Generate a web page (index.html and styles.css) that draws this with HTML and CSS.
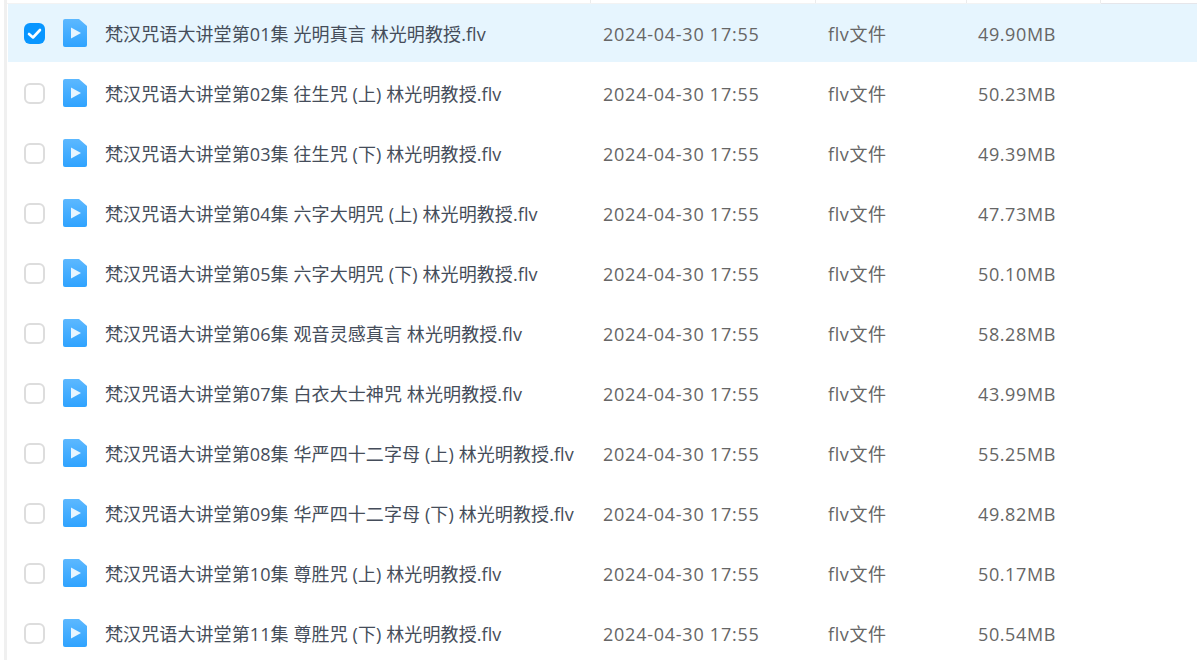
FILE: index.html
```html
<!DOCTYPE html>
<html lang="zh-CN">
<head>
    <meta charset="UTF-8">
    <title>文件列表</title>
    <link rel="stylesheet" href="styles.css">
</head>
<body>
    <svg class="defs" width="0" height="0">
        <defs>
            <linearGradient id="fileBlue" x1="0" y1="0" x2="0" y2="1">
                <stop offset="0" stop-color="#5cb8ff"/>
                <stop offset="1" stop-color="#2fa3ff"/>
            </linearGradient>
            <symbol id="video" viewBox="0 0 24 28">
                <path d="M2 0H16L24 7V26a2 2 0 0 1-2 2H2a2 2 0 0 1-2-2V2a2 2 0 0 1 2-2Z" fill="url(#fileBlue)"/>
                <path d="M8 8.5 18 14 8 19.5Z" fill="#e8f5ff"/>
            </symbol>
        </defs>
    </svg>
    <div class="header-line">
        <span class="tick t1"></span><span class="tick t2"></span><span class="tick t3"></span><span class="tick t4"></span><span class="header-end"></span>
    </div>
    <div class="list">
        <div class="row selected">
            <span class="check"><svg viewBox="0 0 21 21" width="21" height="21"><path d="M5 11 9 14.5 16 7" fill="none" stroke="#fff" stroke-width="2.6" stroke-linecap="round" stroke-linejoin="round"/></svg></span>
            <svg class="icon"><use href="#video"/></svg>
            <span class="name">梵汉咒语大讲堂第01集 光明真言 林光明教授.flv</span>
            <span class="date">2024-04-30 17:55</span><span class="type">flv文件</span><span class="size">49.90MB</span>
        </div>
        <div class="row">
            <span class="check"></span>
            <svg class="icon"><use href="#video"/></svg>
            <span class="name">梵汉咒语大讲堂第02集 往生咒 (上) 林光明教授.flv</span>
            <span class="date">2024-04-30 17:55</span><span class="type">flv文件</span><span class="size">50.23MB</span>
        </div>
        <div class="row">
            <span class="check"></span>
            <svg class="icon"><use href="#video"/></svg>
            <span class="name">梵汉咒语大讲堂第03集 往生咒 (下) 林光明教授.flv</span>
            <span class="date">2024-04-30 17:55</span><span class="type">flv文件</span><span class="size">49.39MB</span>
        </div>
        <div class="row">
            <span class="check"></span>
            <svg class="icon"><use href="#video"/></svg>
            <span class="name">梵汉咒语大讲堂第04集 六字大明咒 (上) 林光明教授.flv</span>
            <span class="date">2024-04-30 17:55</span><span class="type">flv文件</span><span class="size">47.73MB</span>
        </div>
        <div class="row">
            <span class="check"></span>
            <svg class="icon"><use href="#video"/></svg>
            <span class="name">梵汉咒语大讲堂第05集 六字大明咒 (下) 林光明教授.flv</span>
            <span class="date">2024-04-30 17:55</span><span class="type">flv文件</span><span class="size">50.10MB</span>
        </div>
        <div class="row">
            <span class="check"></span>
            <svg class="icon"><use href="#video"/></svg>
            <span class="name">梵汉咒语大讲堂第06集 观音灵感真言 林光明教授.flv</span>
            <span class="date">2024-04-30 17:55</span><span class="type">flv文件</span><span class="size">58.28MB</span>
        </div>
        <div class="row">
            <span class="check"></span>
            <svg class="icon"><use href="#video"/></svg>
            <span class="name">梵汉咒语大讲堂第07集 白衣大士神咒 林光明教授.flv</span>
            <span class="date">2024-04-30 17:55</span><span class="type">flv文件</span><span class="size">43.99MB</span>
        </div>
        <div class="row">
            <span class="check"></span>
            <svg class="icon"><use href="#video"/></svg>
            <span class="name">梵汉咒语大讲堂第08集 华严四十二字母 (上) 林光明教授.flv</span>
            <span class="date">2024-04-30 17:55</span><span class="type">flv文件</span><span class="size">55.25MB</span>
        </div>
        <div class="row">
            <span class="check"></span>
            <svg class="icon"><use href="#video"/></svg>
            <span class="name">梵汉咒语大讲堂第09集 华严四十二字母 (下) 林光明教授.flv</span>
            <span class="date">2024-04-30 17:55</span><span class="type">flv文件</span><span class="size">49.82MB</span>
        </div>
        <div class="row">
            <span class="check"></span>
            <svg class="icon"><use href="#video"/></svg>
            <span class="name">梵汉咒语大讲堂第10集 尊胜咒 (上) 林光明教授.flv</span>
            <span class="date">2024-04-30 17:55</span><span class="type">flv文件</span><span class="size">50.17MB</span>
        </div>
        <div class="row">
            <span class="check"></span>
            <svg class="icon"><use href="#video"/></svg>
            <span class="name">梵汉咒语大讲堂第11集 尊胜咒 (下) 林光明教授.flv</span>
            <span class="date">2024-04-30 17:55</span><span class="type">flv文件</span><span class="size">50.54MB</span>
        </div>
    </div>
</body>
</html>
```
FILE: styles.css
```css
html, body {
    height: 100%;
}

body {
    margin: 0 0 0 4px;
    background-color: #fff;
    font-family: "Open Sans", "Noto Sans CJK SC", sans-serif;
    font-size: 18px;
    color: #666;
    overflow: hidden;
    border-left: 3px solid #f0f0f0;
}

.defs {
    display: block;
    height: 0;
}

.header-line {
    display: flex;
    height: 3px;
    border-bottom: 1px solid #f3f3f3;
}

.tick {
    width: 1px;
    background-color: #ececec;
}

.t1 { margin-left: 583px; }
.t2 { margin-left: 224px; }
.t3 { margin-left: 150px; }
.t4 { margin-left: 133px; }

.header-end {
    flex: 1;
    border-bottom: 1px solid #e6e6ea;
    margin-bottom: -1px;
}

.list {
    padding-left: 1px;
}

.row {
    display: flex;
    align-items: center;
    height: 58px;
    margin-bottom: 2px;
}

.row.selected {
    background-color: #e6f5fe;
}

.check {
    flex: none;
    box-sizing: border-box;
    width: 21px;
    height: 21px;
    margin: 1px 0 0 16px;
    border: 2px solid #ddd;
    border-radius: 6px;
    background-color: #fff;
}

.selected .check {
    border: none;
    background-color: #0996ff;
}

.check svg {
    display: block;
}

.icon {
    flex: none;
    width: 24px;
    height: 28px;
    margin-left: 18px;
}

.name {
    flex: none;
    width: 498px;
    margin-left: 18px;
    color: #454d5a;
    letter-spacing: 0.1px;
    white-space: nowrap;
}

.date {
    flex: none;
    width: 225px;
    padding-top: 2px;
    letter-spacing: 0.75px;
}

.type {
    flex: none;
    width: 150px;
    letter-spacing: 0.6px;
}

.size {
    flex: none;
    padding-top: 2px;
    letter-spacing: 0.6px;
}
```
